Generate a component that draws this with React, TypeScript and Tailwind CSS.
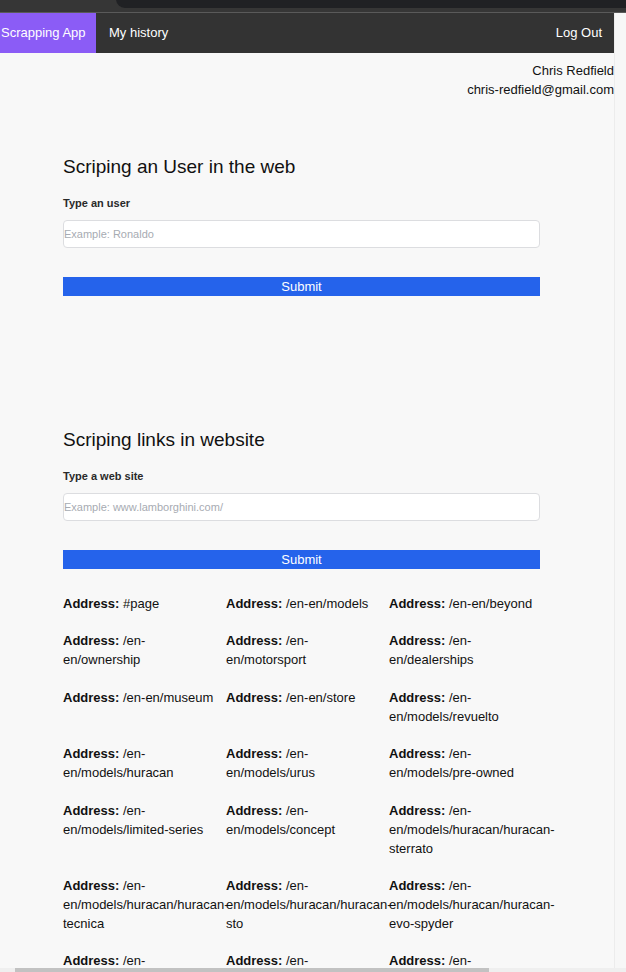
import React from "react";

type Item = { first: string; rest?: string[] };

const items: Item[] = [
  { first: "#page" },
  { first: "/en-en/models" },
  { first: "/en-en/beyond" },
  { first: "/en-", rest: ["en/ownership"] },
  { first: "/en-", rest: ["en/motorsport"] },
  { first: "/en-", rest: ["en/dealerships"] },
  { first: "/en-en/museum" },
  { first: "/en-en/store" },
  { first: "/en-", rest: ["en/models/revuelto"] },
  { first: "/en-", rest: ["en/models/huracan"] },
  { first: "/en-", rest: ["en/models/urus"] },
  { first: "/en-", rest: ["en/models/pre-owned"] },
  { first: "/en-", rest: ["en/models/limited-series"] },
  { first: "/en-", rest: ["en/models/concept"] },
  { first: "/en-", rest: ["en/models/huracan/huracan-", "sterrato"] },
  { first: "/en-", rest: ["en/models/huracan/huracan-", "tecnica"] },
  { first: "/en-", rest: ["en/models/huracan/huracan-", "sto"] },
  { first: "/en-", rest: ["en/models/huracan/huracan-", "evo-spyder"] },
  { first: "/en-", rest: ["en/models/huracan/huracan-", "evo"] },
  { first: "/en-", rest: ["en/models/huracan/huracan-", "evo-rwd"] },
  { first: "/en-", rest: ["en/models/urus/urus-s"] },
];

function Section({
  title,
  label,
  placeholder,
}: {
  title: string;
  label: string;
  placeholder: string;
}) {
  return (
    <section className="w-[477px]">
      <h2 className="text-[19px] leading-[28px] text-[#111]">{title}</h2>
      <label className="mt-[14px] block text-[11px] leading-[16px] font-bold text-[#2a2a2a]">
        {label}
      </label>
      <input
        className="mt-[9px] block h-[28px] w-full rounded-[4px] border border-[#dcdde0] bg-white px-0 text-[11px] text-[#222] outline-none placeholder:text-[#a7abb2]"
        placeholder={placeholder}
      />
      <button className="mt-[29px] block h-[19px] w-full bg-[#2563eb] text-[13px] leading-[19px] text-white">
        Submit
      </button>
    </section>
  );
}

export default function App() {
  return (
    <div className="relative h-[972px] w-[626px] overflow-hidden bg-[#f8f8f8] font-['Liberation_Sans',Arial,sans-serif]">
      {/* browser chrome */}
      <div className="relative h-[12px] overflow-hidden bg-[#363636]">
        <div className="absolute left-[116px] top-[-10px] h-[18px] w-[540px] rounded-bl-[9px] bg-[#202124]" />
      </div>
      <div className="h-px bg-[#5a5a5a]" />

      <div className="flex">
        <div className="w-[614px]">
          {/* nav */}
          <nav className="flex h-[40px] items-center bg-[#333333] text-[13px] text-white">
            <div className="flex h-full w-[96px] items-center bg-[#8b5cf6] pl-[1px]">
              <span className="whitespace-nowrap">Scrapping App</span>
            </div>
            <div className="ml-[13px]">My history</div>
            <div className="ml-auto mr-[12px]">Log Out</div>
          </nav>

          {/* user */}
          <div className="mt-[8px] text-right text-[13px] leading-[19px] text-[#111]">
            <div>Chris Redfield</div>
            <div>chris-redfield@gmail.com</div>
          </div>

          <main className="pl-[63px]">
            <div className="mt-[54px]">
              <Section
                title="Scriping an User in the web"
                label="Type an user"
                placeholder="Example: Ronaldo"
              />
            </div>
            <div className="mt-[130px]">
              <Section
                title="Scriping links in website"
                label="Type a web site"
                placeholder="Example: www.lamborghini.com/"
              />
            </div>

            <div className="mt-[25px] grid w-[489px] grid-cols-3 gap-y-[18.4px] text-[13px] leading-[19px] text-[#111]">
              {items.map((it, i) => (
                <div key={i} className="whitespace-nowrap">
                  <div>
                    <b>Address:</b> {it.first}
                  </div>
                  {it.rest?.map((r, j) => (
                    <div key={j}>{r}</div>
                  ))}
                </div>
              ))}
            </div>
          </main>
        </div>
        {/* vertical scrollbar track */}
        <div className="w-[12px] border-l border-[#ececec] bg-[#f7f7f7]" />
      </div>

      {/* horizontal scrollbar */}
      <div className="absolute bottom-0 left-0 right-0 h-[4px] bg-[#efefef]">
        <div className="absolute left-[15px] top-0 h-[4px] w-[474px] bg-[#c2c2c2]" />
      </div>
    </div>
  );
}
